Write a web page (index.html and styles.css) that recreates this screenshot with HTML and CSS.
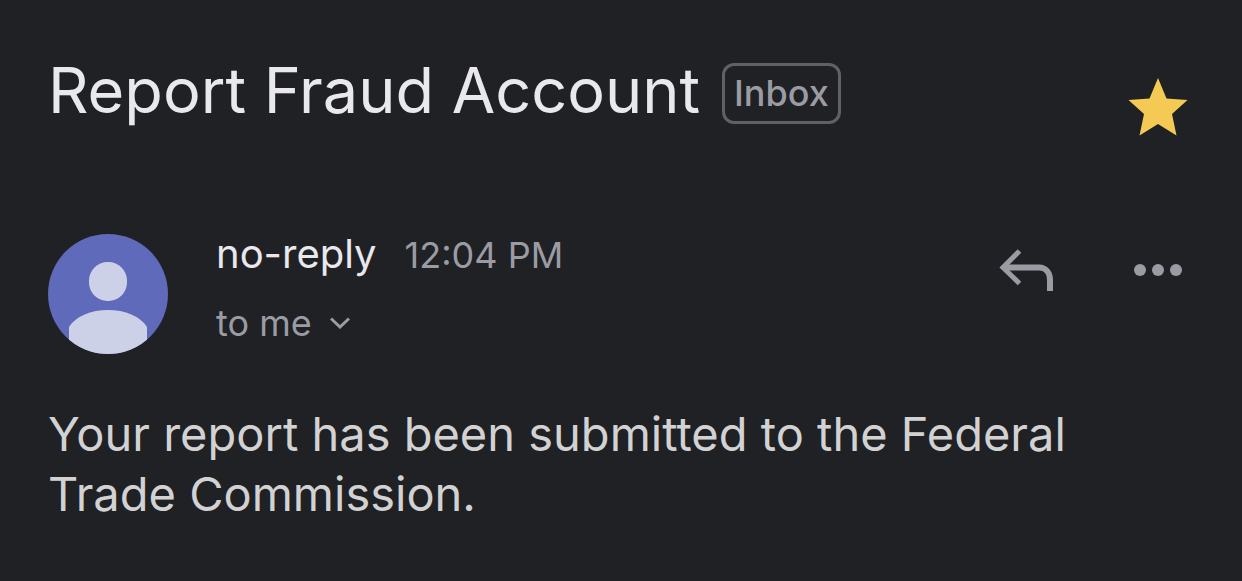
FILE: index.html
```
<!DOCTYPE html>
<html lang="en">
<head>
  <meta charset="UTF-8">
  <meta name="viewport" content="width=device-width, initial-scale=1.0">
  <title>Report Fraud Account</title>
  <link rel="stylesheet" href="styles.css">
</head>
<body>
  <main class="message">
    <header class="subject">
      <h1>Report Fraud Account</h1>
      <button class="label">Inbox</button>
      <button class="icon-button star" aria-label="Starred">
        <svg width="60" height="58" viewBox="0 0 60 58">
          <path fill="#f4ca54" d="M30 0l8.500 20.500L59.500 22 44 36l4.500 21.500L30 46 11.500 57.500 16 36 0.500 22 21.500 20.500z"/>
        </svg>
      </button>
    </header>

    <section class="sender">
      <svg class="avatar" width="120" height="120" viewBox="0 0 120 120" aria-hidden="true">
        <defs>
          <clipPath id="circle"><circle cx="60" cy="60" r="60"/></clipPath>
        </defs>
        <g clip-path="url(#circle)">
          <rect width="120" height="120" fill="#5f6aba"/>
          <rect x="41" y="28" width="38" height="39" rx="18.500" fill="#cdd1e8"/>
          <path fill="#cdd1e8" d="M21 120V93C28 82 43 76 60 76s32 6 39 17v27z"/>
        </g>
      </svg>
      <div class="details">
        <div class="from">
          <span class="name">no-reply</span>
          <time class="time">12:04 PM</time>
        </div>
        <button class="recipient">
          to me
          <svg width="20" height="12" viewBox="0 0 20 12">
            <path fill="none" stroke="#9b9ca3" stroke-width="3" d="M1 1.500l9 8.500 9-8.500"/>
          </svg>
        </button>
      </div>
      <div class="actions">
        <button class="icon-button" aria-label="Reply">
          <svg width="56" height="44" viewBox="0 0 56 44">
            <path fill="none" stroke="#9b9ca3" stroke-width="5" d="M21.500 3L5 19.500l16.500 16"/>
            <path fill="none" stroke="#9b9ca3" stroke-width="6" d="M6 19.500h35C48 19.500 52 25 52 32v11"/>
          </svg>
        </button>
        <button class="icon-button" aria-label="More options">
          <svg width="48" height="12" viewBox="0 0 48 12">
            <g fill="#9b9ca3">
              <circle cx="6" cy="6" r="6"/>
              <circle cx="24" cy="6" r="6"/>
              <circle cx="42" cy="6" r="6"/>
            </g>
          </svg>
        </button>
      </div>
    </section>

    <p class="body-text">Your report has been submitted to the Federal Trade Commission.</p>
  </main>
</body>
</html>
```

FILE: styles.css
```
* {
  box-sizing: border-box;
}

body {
  margin: 0;
  min-height: 100vh;
  background: #202125;
  color: #e8e8ed;
  font-family: Inter, "Liberation Sans", sans-serif;
}

button {
  padding: 0;
  border: none;
  background: none;
  color: inherit;
  font-family: inherit;
  cursor: pointer;
}

svg {
  display: block;
}

.message {
  padding: 50px 54px 50px 48px;
}

.subject {
  display: flex;
  align-items: flex-start;
  gap: 22px;
}

.subject h1 {
  margin: 0;
  font-size: 63px;
  font-weight: 400;
  line-height: 80px;
}

.label {
  margin-top: 13px;
  padding: 0 9px;
  border: 3px solid #606165;
  border-radius: 12px;
  color: #9b9ca3;
  font-size: 36px;
  font-weight: 500;
  line-height: 55px;
}

.star {
  margin-left: auto;
  padding-top: 28px;
}

.sender {
  display: flex;
  margin-top: 98px;
}

.avatar {
  flex: none;
}

.details {
  margin-left: 48px;
}

.from {
  display: flex;
  align-items: baseline;
  gap: 28px;
  line-height: 40px;
}

.name {
  font-size: 40px;
}

.time {
  color: #9b9ca3;
  font-size: 36px;
}

.recipient {
  display: flex;
  align-items: center;
  gap: 18px;
  margin-top: 28px;
  color: #9b9ca3;
  font-size: 36px;
  line-height: 40px;
}

.actions {
  display: flex;
  align-items: center;
  align-self: flex-start;
  gap: 80px;
  margin: 14px 6px 0 auto;
}

.body-text {
  margin: 50px 0 0;
  color: #d2d2d3;
  font-size: 47px;
  line-height: 60px;
}
```
